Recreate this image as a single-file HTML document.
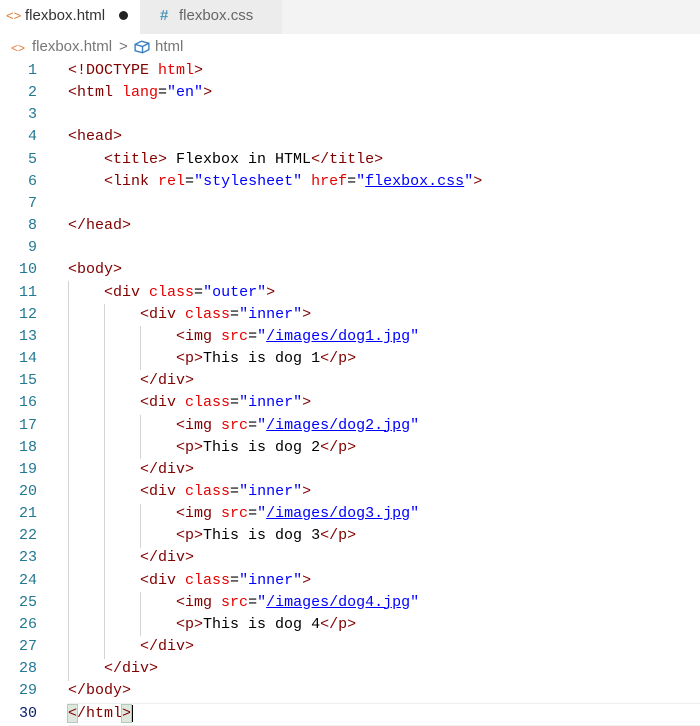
<!DOCTYPE html>
<html><head><style>
body{margin:0;width:700px;height:726px;background:#fff;overflow:hidden;position:relative;font-family:"Liberation Sans",sans-serif}
.tabs{position:absolute;top:0;left:0;width:700px;height:34px;background:#f3f3f3}
.tab1{position:absolute;left:0;top:0;width:140px;height:34px;background:#fff}
.tab2{position:absolute;left:140px;top:0;width:142px;height:34px;background:#ececec}
.t{position:absolute;font-size:15px;color:#333;top:7px}
.bc{position:absolute;top:38px;font-size:15px;color:#777}
.code{position:absolute;left:0;top:60px;font-family:"Liberation Mono",monospace;font-size:15px}
.l{height:22.17px;line-height:22.17px;white-space:pre;position:relative}
.n{display:inline-block;width:37px;text-align:right;color:#237893;margin-right:31px}
.b{color:#800000}.a{color:#e50000}.v{color:#0000ff}
.u{text-decoration:underline;text-decoration-color:#0000ff}
.g{position:absolute;width:1px;background:#d3d3d3}
</style></head><body>
<div class="tabs"><div class="tab1"></div><div class="tab2"></div>
<span class="t" style="left:6px;color:#e37933;font-size:13px;top:8px">&lt;&gt;</span>
<span class="t" style="left:25px">flexbox.html</span>
<span style="position:absolute;left:119px;top:11px;width:9px;height:9px;border-radius:50%;background:#222"></span>
<span class="t" style="left:160px;color:#519aba;font-weight:bold">#</span>
<span class="t" style="left:179px;color:#666">flexbox.css</span>
</div>
<span class="bc" style="left:11px;color:#e37933;font-size:12px;top:41px">&lt;&gt;</span>
<span class="bc" style="left:32px">flexbox.html</span>
<span class="bc" style="left:119px">&gt;</span>
<svg style="position:absolute;left:133px;top:39px" width="18" height="16" viewBox="0 0 17 15"><path d="M2 5 L8 2 L15 4 L15 10 L9 13 L2 11 Z M2 5 L9 7 L15 4 M9 7 L9 13" fill="none" stroke="#3a7fc0" stroke-width="1.3"/></svg>
<span class="bc" style="left:155px">html</span>
<div class="g" style="left:68px;top:281px;height:400px"></div>
<div class="g" style="left:104px;top:304px;height:355px"></div>
<div class="g" style="left:140px;top:326px;height:44px"></div>
<div class="g" style="left:140px;top:415px;height:44px"></div>
<div class="g" style="left:140px;top:504px;height:44px"></div>
<div class="g" style="left:140px;top:592px;height:44px"></div>
<div style="position:absolute;left:68px;top:703px;width:632px;height:21px;border-top:1px solid #eee;border-bottom:1px solid #eee"></div>
<div class="code">
<div class="l"><span class="n">1</span><span class="b">&lt;!DOCTYPE </span><span class="a">html</span><span class="b">&gt;</span></div>
<div class="l"><span class="n">2</span><span class="b">&lt;html </span><span class="a">lang</span>=<span class="v">"en"</span><span class="b">&gt;</span></div>
<div class="l"><span class="n">3</span></div>
<div class="l"><span class="n">4</span><span class="b">&lt;head&gt;</span></div>
<div class="l"><span class="n">5</span>    <span class="b">&lt;title&gt;</span> Flexbox in HTML<span class="b">&lt;/title&gt;</span></div>
<div class="l"><span class="n">6</span>    <span class="b">&lt;link </span><span class="a">rel</span>=<span class="v">"stylesheet"</span> <span class="a">href</span>=<span class="v">"<span class="u">flexbox.css</span>"</span><span class="b">&gt;</span></div>
<div class="l"><span class="n">7</span></div>
<div class="l"><span class="n">8</span><span class="b">&lt;/head&gt;</span></div>
<div class="l"><span class="n">9</span></div>
<div class="l"><span class="n">10</span><span class="b">&lt;body&gt;</span></div>
<div class="l"><span class="n">11</span>    <span class="b">&lt;div </span><span class="a">class</span>=<span class="v">"outer"</span><span class="b">&gt;</span></div>
<div class="l"><span class="n">12</span>        <span class="b">&lt;div </span><span class="a">class</span>=<span class="v">"inner"</span><span class="b">&gt;</span></div>
<div class="l"><span class="n">13</span>            <span class="b">&lt;img </span><span class="a">src</span>=<span class="v">"<span class="u">/images/dog1.jpg</span>"</span></div>
<div class="l"><span class="n">14</span>            <span class="b">&lt;p&gt;</span>This is dog 1<span class="b">&lt;/p&gt;</span></div>
<div class="l"><span class="n">15</span>        <span class="b">&lt;/div&gt;</span></div>
<div class="l"><span class="n">16</span>        <span class="b">&lt;div </span><span class="a">class</span>=<span class="v">"inner"</span><span class="b">&gt;</span></div>
<div class="l"><span class="n">17</span>            <span class="b">&lt;img </span><span class="a">src</span>=<span class="v">"<span class="u">/images/dog2.jpg</span>"</span></div>
<div class="l"><span class="n">18</span>            <span class="b">&lt;p&gt;</span>This is dog 2<span class="b">&lt;/p&gt;</span></div>
<div class="l"><span class="n">19</span>        <span class="b">&lt;/div&gt;</span></div>
<div class="l"><span class="n">20</span>        <span class="b">&lt;div </span><span class="a">class</span>=<span class="v">"inner"</span><span class="b">&gt;</span></div>
<div class="l"><span class="n">21</span>            <span class="b">&lt;img </span><span class="a">src</span>=<span class="v">"<span class="u">/images/dog3.jpg</span>"</span></div>
<div class="l"><span class="n">22</span>            <span class="b">&lt;p&gt;</span>This is dog 3<span class="b">&lt;/p&gt;</span></div>
<div class="l"><span class="n">23</span>        <span class="b">&lt;/div&gt;</span></div>
<div class="l"><span class="n">24</span>        <span class="b">&lt;div </span><span class="a">class</span>=<span class="v">"inner"</span><span class="b">&gt;</span></div>
<div class="l"><span class="n">25</span>            <span class="b">&lt;img </span><span class="a">src</span>=<span class="v">"<span class="u">/images/dog4.jpg</span>"</span></div>
<div class="l"><span class="n">26</span>            <span class="b">&lt;p&gt;</span>This is dog 4<span class="b">&lt;/p&gt;</span></div>
<div class="l"><span class="n">27</span>        <span class="b">&lt;/div&gt;</span></div>
<div class="l"><span class="n">28</span>    <span class="b">&lt;/div&gt;</span></div>
<div class="l"><span class="n">29</span><span class="b">&lt;/body&gt;</span></div>
<div class="l"><span class="n" style="color:#0b216f">30</span><span class="b"><span style="background:#dfe8df;outline:1px solid #b9c9b9">&lt;</span>/html<span style="background:#dfe8df;outline:1px solid #b9c9b9">&gt;</span></span><span style="border-left:2px solid #000"></span></div>
</div>
</body></html>
